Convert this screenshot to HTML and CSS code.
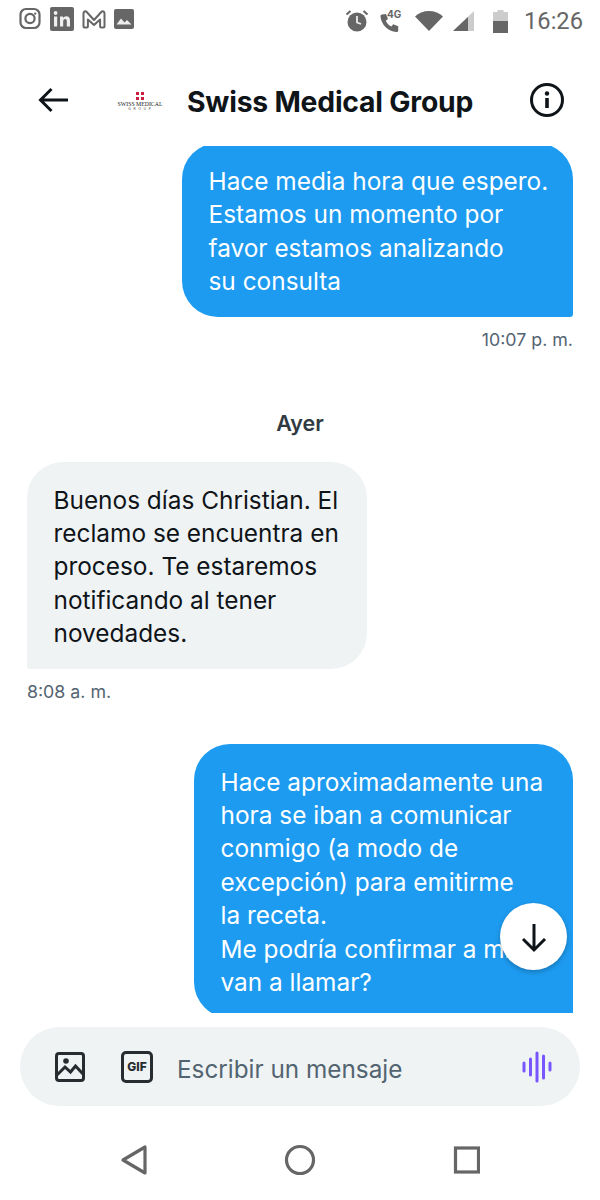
FILE: index.html
```html
<!DOCTYPE html>
<html lang="es">
<head>
<meta charset="utf-8">
<title>Swiss Medical Group</title>
<link rel="stylesheet" href="styles.css">
</head>
<body>
<div class="phone">
  <div class="status">
    <div class="status-group">
      <svg class="si" width="26" height="26" viewBox="0 0 26 26"><rect x="3.5" y="3" width="19" height="19" rx="5.5" fill="none" stroke="#666" stroke-width="2.2"/><circle cx="13" cy="12.5" r="4.6" fill="none" stroke="#666" stroke-width="2.2"/><circle cx="18.2" cy="7.6" r="1.2" fill="#666"/></svg>
      <svg class="si" width="24" height="24" viewBox="0 0 24 24"><rect width="24" height="24" rx="2" fill="#666"/><rect x="4" y="9.5" width="3.2" height="10" fill="#eee"/><circle cx="5.6" cy="6" r="1.9" fill="#eee"/><path d="M10 9.5h3v1.5c.7-1.1 1.900-1.800 3.300-1.800 2.700 0 3.700 1.700 3.700 4.500v5.800h-3.200v-5.200c0-1.500-.4-2.400-1.600-2.400-1.300 0-2 .9-2 2.500v5.100H10z" fill="#eee"/></svg>
      <svg class="si" width="26" height="22" viewBox="0 0 26 22"><path d="M2.500 18.500V5.200C2.500 3.400 4.500 2.700 5.700 4L13 12l7.300-8c1.200-1.300 3.200-.6 3.200 1.200v13.300c0 .6-.4 1-1 1h-2.400c-.6 0-1-.4-1-1v-7L13 17l-6.100-5.500v7c0 .6-.4 1-1 1H3.500c-.6 0-1-.4-1-1z" fill="none" stroke="#666" stroke-width="2" stroke-linejoin="round"/></svg>
      <svg class="si" width="20" height="20" viewBox="0 0 20 20"><rect width="20" height="20" rx="2" fill="#666"/><path d="M2.500 15.500l4.500-6 3.500 4 2.500-2.500 4.500 4.500z" fill="#eee"/></svg>
    </div>
    <div class="status-group status-right">
      <svg class="si" width="24" height="26" viewBox="0 0 24 26"><circle cx="12" cy="14" r="9.500" fill="#666"/><path d="M12 8v6.500l4 1.500" fill="none" stroke="#eee" stroke-width="1.800"/><path d="M1.500 6.500L5.500 3M22.500 6.500L18.500 3" stroke="#666" stroke-width="2"/></svg>
      <span class="call">
        <svg width="22" height="22" viewBox="0 0 22 22"><path d="M3 2.500l4-.5 2 5-2.200 1.800c1.100 2.600 3 4.500 5.600 5.700l1.800-2.300 5 2v4.300c0 1-.8 1.500-1.800 1.500C9 19.500 2 12.500 1.500 4.300 1.500 3.300 2 2.600 3 2.500z" fill="#666"/></svg>
        <span class="lte">4G</span>
      </span>
      <svg class="si" width="28" height="22" viewBox="0 0 28 22"><path d="M14 21L0 6.500C3.500 3 8.500 1 14 1s10.500 2 14 5.500z" fill="#666"/></svg>
      <svg class="si" width="21" height="22" viewBox="0 0 21 22"><path d="M21 1v20H0z" fill="#ccc"/><path d="M15 7v14H0z" fill="#666"/></svg>
      <svg class="si battery" width="15" height="23" viewBox="0 0 15 23"><path d="M4.500 0h6v2H15v21H0V2h4.500z" fill="#ccc"/><rect y="11" width="15" height="12" fill="#666"/></svg>
      <span class="clock">16:26</span>
    </div>
  </div>

  <header class="head">
    <svg class="back" width="32" height="26" viewBox="0 0 32 26"><path d="M30 13H3M13.500 2L2.500 13l11 11" fill="none" stroke="#0f1419" stroke-width="3"/></svg>
    <div class="logo">
      <span class="logo-mark"><i></i><i></i><i></i><i></i></span>
      <span class="logo-name">SWISS MEDICAL</span>
      <span class="logo-sub">G R O U P</span>
    </div>
    <h1 class="title">Swiss Medical Group</h1>
    <svg class="info" width="36" height="36" viewBox="0 0 36 36"><circle cx="18" cy="18" r="15.500" fill="none" stroke="#0f1419" stroke-width="3"/><circle cx="18" cy="11.500" r="2.200" fill="#0f1419"/><rect x="16.200" y="16" width="3.600" height="10" fill="#0f1419"/></svg>
  </header>

  <main class="chat">
    <div class="msg out first">
      <div class="bubble b1">Hace media hora que espero.<br>Estamos un momento por<br>favor estamos analizando<br>su consulta</div>
      <div class="time">10:07 p. m.</div>
    </div>
    <div class="day">Ayer</div>
    <div class="msg in">
      <div class="bubble b2">Buenos días Christian. El<br>reclamo se encuentra en<br>proceso. Te estaremos<br>notificando al tener<br>novedades.</div>
      <div class="time">8:08 a. m.</div>
    </div>
    <div class="msg out last">
      <div class="bubble b3">Hace aproximadamente una<br>hora se iban a comunicar<br>conmigo (a modo de<br>excepción) para emitirme<br>la receta.<br>Me podría confirmar a mi<br>van a llamar?</div>
    </div>
    <button class="fab" aria-label="Bajar">
      <svg width="28" height="32" viewBox="0 0 28 32"><path d="M14 3v26M3 18l11 11 11-11" fill="none" stroke="#0f1419" stroke-width="3"/></svg>
    </button>
  </main>

  <div class="composer">
    <svg class="c-icon" width="32" height="32" viewBox="0 0 32 32"><rect x="2.500" y="2.500" width="27" height="27" rx="2.500" fill="none" stroke="#272c30" stroke-width="3"/><circle cx="12" cy="10" r="2.800" fill="#272c30"/><path d="M3 24l8-8 5.500 5 5-6 7.500 8" fill="none" stroke="#272c30" stroke-width="3"/></svg>
    <span class="gif">GIF</span>
    <span class="placeholder">Escribir un mensaje</span>
    <svg class="voice" width="32" height="32" viewBox="0 0 32 32"><g stroke="#7856ff" stroke-linecap="round" fill="none"><path d="M3 12v8M9.500 8v16M16 2v28M22.500 5v22M29 12v7" stroke-width="3"/></g></svg>
  </div>

  <nav class="nav">
    <svg width="30" height="32" viewBox="0 0 30 32"><path d="M25 3v26L3 16z" fill="none" stroke="#666" stroke-width="3.200" stroke-linejoin="round"/></svg>
    <svg width="32" height="32" viewBox="0 0 32 32"><circle cx="16" cy="16" r="13.500" fill="none" stroke="#666" stroke-width="3.200"/></svg>
    <svg width="30" height="28" viewBox="0 0 30 28"><rect x="5.500" y="2" width="23" height="24" fill="none" stroke="#666" stroke-width="3.200"/></svg>
  </nav>
</div>
</body>
</html>
```
FILE: styles.css
```css
* { box-sizing: border-box; }
html, body { margin: 0; padding: 0; }
body { background: #fff; font-family: Inter, "Liberation Sans", sans-serif; color: #0f1419; }

.phone { width: 600px; height: 1200px; display: flex; flex-direction: column; overflow: hidden; background: #fff; }

.status { height: 40px; padding: 6px 17px 0 17px; display: flex; justify-content: space-between; align-items: flex-start; }
.status-group { display: flex; align-items: center; gap: 7px; }
.status-right { gap: 10px; }
.si { display: block; flex: none; }
.battery { margin-left: 9px; }
.call { position: relative; display: block; width: 24px; height: 22px; margin-right: 2px; }
.call svg { display: block; margin-top: 2px; }
.lte { position: absolute; top: -2px; left: 8px; font-size: 10px; font-weight: 700; color: #666; }
.clock { font-family: Roboto, sans-serif; font-size: 23.700px; color: #666; margin-left: 6px; line-height: 30px; }

.head { height: 106px; display: flex; align-items: center; padding: 13px 0 0 38px; }
.back { flex: none; }
.logo { width: 44px; margin-left: 48px; flex: none; display: flex; flex-direction: column; align-items: center; padding-top: 3px; }
.logo-mark { width: 8px; height: 8px; display: grid; grid-template-columns: 3px 3px; gap: 2px; }
.logo-mark i { background: #c8203c; }
.logo-name { font-family: "Liberation Serif", serif; font-size: 5.800px; line-height: 8px; white-space: nowrap; color: #222; }
.logo-sub { font-family: "Liberation Sans", sans-serif; font-size: 3px; line-height: 3px; white-space: nowrap; color: #444; letter-spacing: 1px; }
.title { margin: 4px 0 0 25px; font-size: 28.300px; font-weight: 700; letter-spacing: -0.2px; white-space: nowrap; width: 324px; }
.info { flex: none; margin-left: 18px; }

.chat { position: relative; height: 867px; overflow: hidden; flex: none; }
.msg { display: flex; flex-direction: column; }
.msg.out { align-items: flex-end; padding-right: 27px; }
.msg.in { align-items: flex-start; padding-left: 27px; }
.first { margin-top: -3px; }
.bubble { font-size: 24.400px; line-height: 33.400px; padding: 22px 20px 18px 26.500px; border-radius: 36px; }
.out .bubble { background: #1d9bf0; color: #fff; border-bottom-right-radius: 3px; }
.in .bubble { background: #eff3f4; color: #0f1419; border-bottom-left-radius: 3px; }
.b1 { width: 391px; }
.b2 { width: 340px; }
.b3 { width: 379px; }
.time { font-size: 17.800px; line-height: 24px; color: #536471; margin-top: 11px; }
.day { text-align: center; font-size: 21.500px; font-weight: 600; line-height: 26px; color: #2f3a42; margin-top: 58px; margin-bottom: 26px; }
.in + .out { margin-top: 40px; }
.fab { position: absolute; left: 500px; top: 757px; width: 67px; height: 67px; border: 0; padding: 0; border-radius: 50%; background: #fff; box-shadow: 0 2px 5px rgba(0,0,0,.25); display: flex; align-items: center; justify-content: center; }

.composer { margin: 14px 20px 0; height: 79px; border-radius: 40px; background: #eff3f4; display: flex; align-items: center; padding: 0 27px 0 34px; flex: none; }
.c-icon { flex: none; }
.gif { flex: none; margin-left: 35px; width: 32px; height: 32px; border: 3px solid #272c30; border-radius: 5px; font-size: 12px; font-weight: 800; color: #272c30; display: flex; align-items: center; justify-content: center; }
.placeholder { flex: 1; margin-left: 24px; padding-top: 4px; font-size: 24.300px; color: #536471; }
.voice { flex: none; }

.nav { flex: 1; display: flex; align-items: center; justify-content: space-between; padding: 12px 120px 0 120px; margin-top: 2px; }
```
